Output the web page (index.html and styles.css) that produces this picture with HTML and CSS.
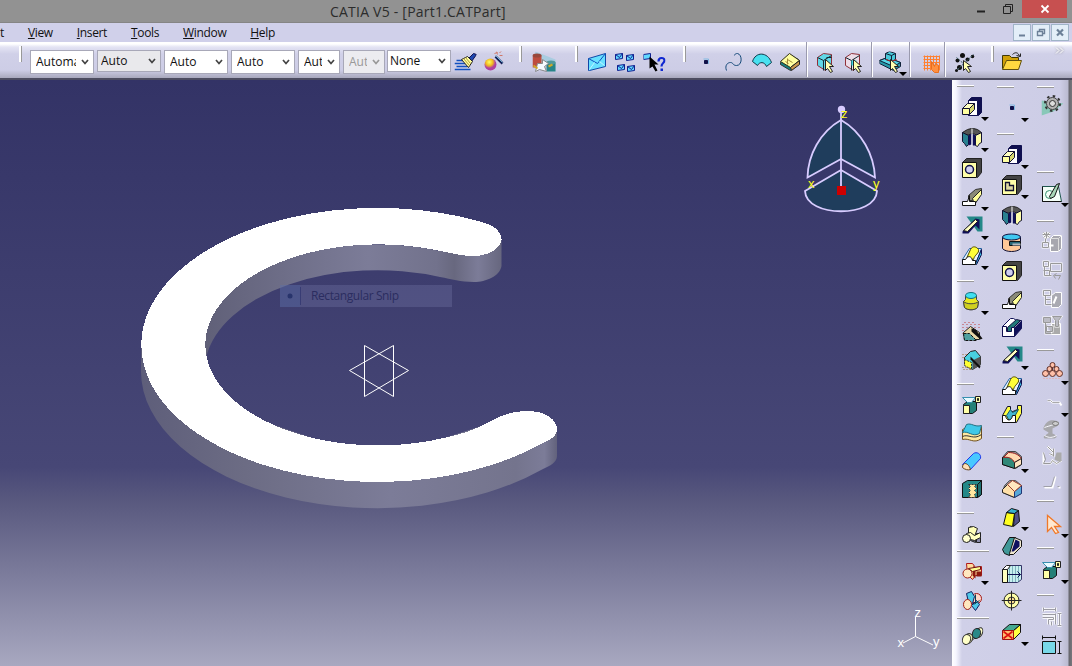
FILE: index.html
```html
<!DOCTYPE html>
<html lang="en">
<head>
<meta charset="utf-8">
<title>CATIA V5 - [Part1.CATPart]</title>
<link rel="stylesheet" href="styles.css">
</head>
<body>
<svg class="sprite" width="0" height="0">
<defs>
<symbol id="pad" viewBox="0 0 22 22"><path d="M7 4l3-3h10v15l-3 3H7z" fill="#101050" stroke="#101050"/><path d="M7 4h9v15H7z" fill="#fff" stroke="#101050"/><path d="M1 12l5-5h7l-5 5z" fill="#ffffc0" stroke="#101030"/><path d="M1 12h7v6H1z" fill="#ffffa0" stroke="#101030"/><path d="M8 12l5-5v6l-5 5z" fill="#d8d870" stroke="#101030"/></symbol>
<symbol id="groove" viewBox="0 0 22 22"><path d="M1 5l5-3 4-1h2l4 1 4 3-3 3-6-2-6 2z" fill="#555" stroke="#222"/><path d="M1 5l6 3v9l-2 2-2-3-2-2z" fill="#288090" stroke="#101030"/><path d="M20 5l-6 3v10l2 1 2-3 2-1z" fill="#ffffa8" stroke="#101030"/><path d="M7 8l3-2v11l-3 1zM11 6l3 2v10h-3z" fill="#101058"/><path d="M10.500 1v18" stroke="#fff"/></symbol>
<symbol id="hole" viewBox="0 0 22 22"><path d="M1 5l4-4h15v14l-4 5z" fill="#444" stroke="#222"/><path d="M1 5h14v15H1z" fill="#ffffa8" stroke="#101010"/><circle cx="8" cy="12" r="4" fill="#d0d0f0" stroke="#101048" stroke-width="1.500"/></symbol>
<symbol id="pocket" viewBox="0 0 22 22"><path d="M1 5l4-4h15v14l-4 5z" fill="#444" stroke="#222"/><path d="M1 5h14v15H1z" fill="#ffffa8" stroke="#101010"/><path d="M4 8h4v3h4v5H4z" fill="#ddd8a0" stroke="#101030" stroke-width="1.300"/></symbol>
<symbol id="rib" viewBox="0 0 22 22"><path d="M7 9l7-6 6-1v3L11 14H7z" fill="#8a8a78" stroke="#333"/><path d="M11 12l9-9v5l-7 10z" fill="#ffff98" stroke="#222"/><path d="M1 15h5l2-6v6h6v4H1z" fill="#fff" stroke="#111"/></symbol>
<symbol id="slot" viewBox="0 0 22 22"><path d="M1 9L9 1h3l3 2h5v8l-7 8H1z" fill="#fff" stroke="#101058"/><path d="M6 10l9-8 4 1-8 8v5H6z" fill="#207878" stroke="#101040"/><path d="M12 11l8-8v8l-7 8z" fill="#101058"/><path d="M1 9h4v5h5v-4h3v9H1z" fill="#fff" stroke="#101050"/></symbol>
<symbol id="stiff" viewBox="0 0 22 22"><path d="M5 1h16v15h-5z" fill="#248888"/><path d="M1 16L14 3l4 1v10l-4-4-7 8H1z" fill="#101058"/><path d="M2 15L14 4l2 2L6 16z" fill="#ffffc0" stroke="#222"/></symbol>
<symbol id="loft" viewBox="0 0 22 22"><path d="M1 14L8 3h12l-6 16H1z" fill="#e8f4ff" stroke="#2060a0"/><path d="M14 18l6-14v5l-5 10z" fill="#38c0e0" stroke="#101050"/><path d="M5 13l4-9c2-4 6-3 8 0 1 4-4 5-5 10z" fill="#ffff38" stroke="#504800"/><path d="M1 14h3c2-4 6-4 7 1h3v4H1z" fill="#fff" stroke="#111"/></symbol>
<symbol id="loftcut" viewBox="0 0 22 22"><path d="M1 12l5-9h3v6l7-3V2h4v8l-5 9H1z" fill="#ffff40" stroke="#101030"/><path d="M5 12l4-6 2 3 6-3-5 9-4 3z" fill="#44b8d0" stroke="#175868"/><path d="M1 12h3c1 6 6 6 7 0h3v7H1z" fill="#fff" stroke="#111"/></symbol>
<symbol id="barrel" viewBox="0 0 22 22"><path d="M4 5v4l-2 2 1 6c3 3 10 3 13 0l1-6-2-2V5z" fill="#e8e820" stroke="#444"/><path d="M2 11c3 3 12 3 15 0l-1 6c-3 3-10 3-13 0z" fill="#d0d020" stroke="#444"/><ellipse cx="9.500" cy="5" rx="5.500" ry="3" fill="#40e0f0" stroke="#147080"/></symbol>
<symbol id="shaft" viewBox="0 0 22 22"><path d="M1 5v11c3 4 15 4 18 0v-3h-7V9h7V5z" fill="#ffc898" stroke="#101030"/><ellipse cx="10" cy="4.500" rx="9" ry="3" fill="#40c8f0" stroke="#101040"/><path d="M8 9h11v4H8z" fill="#286878" stroke="#111"/><path d="M11 11h8v2h-8z" fill="#b0b8c0"/></symbol>
<symbol id="split" viewBox="0 0 22 22"><path d="M1 3h18M3 1h12M1 6h18M1 9h4M1 12h3" stroke="#c04040" stroke-dasharray="1 3"/><path d="M2 11l7-6 9 6v7H3z" fill="#e8d8a8" stroke="#222"/><path d="M2 12h6l7 7H3z" fill="#50a0a0" stroke="#111" stroke-dasharray="3 1"/><path d="M10 7l4 1 7 9-2 1-9-8z" fill="#111"/></symbol>
<symbol id="proc" viewBox="0 0 22 22"><path d="M3 8l6-6 5-1 5 6v8l-8 5-8-5z" fill="#48d0e0" stroke="#222"/><path d="M3 10l7 3v7l-7-4z" fill="#ffff30" stroke="#333" stroke-dasharray="2 1"/><path d="M11 11l8-4v9l-8 4z" fill="#555"/><path d="M9 7l10 10-1 2-9-9z" fill="#111"/><path d="M1 5h5M1 8h2M1 18h8M2 20h8" stroke="#a07030" stroke-dasharray="1 2"/></symbol>
<symbol id="sheet" viewBox="0 0 22 22"><path d="M2 10l4-3h9v9l-4 3H2z" fill="#248078" stroke="#111"/><path d="M2 11h6v8H2z" fill="#ffffa8" stroke="#222"/><path d="M1 3h13l-4 5H6z" fill="#e8faff" stroke="#3890b0"/><path d="M14 2h5v6h-5z" fill="#ffffb0" stroke="#222"/><path d="M16 4h1v2h-1z" stroke="#222"/></symbol>
<symbol id="layers" viewBox="0 0 22 22"><path d="M1 7c6-4 8 4 19-3v12c-8 6-12-1-19 1z" fill="#ffe8a0" stroke="#705020"/><path d="M1 10L5 2c5-2 8 3 15 1l-2 8c-7 4-11-3-17-1z" fill="#40c8e8" stroke="#257080"/><path d="M1 14c6-3 11 4 19-2" fill="none" stroke="#333"/></symbol>
<symbol id="roll" viewBox="0 0 22 22"><path d="M1 14L12 3c3-2 8 0 7 5L9 19z" fill="#48c8ff" stroke="#2038e8"/><path d="M1 17c0-6 6-5 8 2-2 1-6 0-8-2z" fill="#ffe0b8" stroke="#604020"/></symbol>
<symbol id="sew" viewBox="0 0 22 22"><path d="M1 5l5-3h14v14l-4 3H1z" fill="#248888" stroke="#111"/><path d="M7 6l2 2-2 2 2 2-2 2 2 2-2 3h7l-1-3 2-2-2-2 2-2-2-2 2-2z" fill="#ffe8a0" stroke="#333" stroke-dasharray="2 1"/><path d="M16 6l4-4v14l-4 3z" fill="#207070" stroke="#111"/></symbol>
<symbol id="parts" viewBox="0 0 22 22"><path d="M9 2l4 2 1 14-5-2zM15 9h4v9h-4z" fill="#8888a8" stroke="#222"/><path d="M7 3l5-1 4 2-3 8-6-3z" fill="#ffffb8" stroke="#222"/><path d="M5 9l4-1 4 3 6-3v5l-6 3-4-1-3 3z" fill="#ffffc0" stroke="#222"/><circle cx="5" cy="14" r="4" fill="#ffffd0" stroke="#222"/></symbol>
<symbol id="partsred" viewBox="0 0 22 22"><path d="M5 3h6l3 4 6-1v9h-6l-3 4-5-5z" fill="#ffdc9c" stroke="#b01818"/><path d="M12 5l2 3v10l-3-3zM15 11h5v5h-5z" fill="#8b1810"/><circle cx="6" cy="13" r="4.500" fill="#ffe8c0" stroke="#a02018"/><path d="M7 8l12-2v3l-8 2z" fill="#ffff90" stroke="#701010"/></symbol>
<symbol id="partsblue" viewBox="0 0 22 22"><circle cx="15" cy="8" r="5" fill="#ffd8c8" stroke="#a01818"/><path d="M5 3l5-2 3 5-2 7-4-1zM10 15l5-5 3 4-4 6z" fill="#50c8e8" stroke="#102060"/><ellipse cx="6" cy="14" rx="4" ry="5" fill="#ffe8c0" stroke="#a02018"/><path d="M14 4v9M12 14l6-4" stroke="#104050"/></symbol>
<symbol id="bean" viewBox="0 0 22 22"><path d="M9 11l5-4v5l-5 4z" fill="#b8d8e0" stroke="#444"/><ellipse cx="7" cy="13" rx="4" ry="5" transform="rotate(20 7 13)" fill="#e8e8b0" stroke="#333"/><ellipse cx="5" cy="14" rx="4" ry="5" transform="rotate(20 5 14)" fill="#ffffc8" stroke="#333"/><ellipse cx="18" cy="7" rx="3" ry="5" transform="rotate(20 18 7)" fill="#ffffc8" stroke="#333"/><ellipse cx="15" cy="8" rx="4" ry="5" transform="rotate(20 15 8)" fill="#288888" stroke="#222"/></symbol>
<symbol id="fillet" viewBox="0 0 22 22"><path d="M1 9l5-6h8l6 5v8l-6 4-13-4z" fill="#8c8c94" stroke="#444"/><path d="M1 9c5-2 11 0 12 5v6L1 16z" fill="#308878" stroke="#111"/><path d="M7 4c6 0 10 2 13 6l-7 4C11 10 7 8 2 9z" fill="#ffd8b0" stroke="#a02020"/><path d="M13 14l7-4v6l-7 4z" fill="#ffe4c0" stroke="#222"/></symbol>
<symbol id="chamfer" viewBox="0 0 22 22"><path d="M3 8l5-5h6l6 5v8l-7 4-12-5z" fill="#909098" stroke="#555"/><path d="M1 12l5-5 7 7v6L1 15z" fill="#ffe0a8" stroke="#222"/><path d="M13 14l7-6v8l-7 4z" fill="#58a8d8" stroke="#203878"/><path d="M6 7l5-4 9 5-7 6z" fill="#ffe8c0" stroke="#a04030"/></symbol>
<symbol id="draft" viewBox="0 0 22 22"><path d="M13 7l4-3 1 11-6 5z" fill="#505088" stroke="#111"/><path d="M5 6l8 1-2 13-9-2z" fill="#ffff20" stroke="#111"/><path d="M5 6l5-4 7 2-4 3z" fill="#38b0d0" stroke="#111"/></symbol>
<symbol id="shell" viewBox="0 0 22 22"><path d="M1 14L8 2h6L8 20l-5-2z" fill="#409898" stroke="#111"/><path d="M8 18L13 2l7 3v6l-8 8H8z" fill="#f0e8d0" stroke="#111"/><path d="M10 16l4-12 4 2v5l-6 5z" fill="#101060"/></symbol>
<symbol id="thick" viewBox="0 0 22 22"><path d="M5 4l3-2h12v14l-4 3H5z" fill="#c8f0f0" stroke="#336"/><path d="M8 3v15M11 3v15M14 3v15M17 3v15" stroke="#34788c" stroke-dasharray="1 1"/><path d="M1 6h5v13H1z" fill="#ffffc0" stroke="#111"/><path d="M1 6l4-4h4L6 6z" fill="#fff" stroke="#222"/><path d="M6 11h13M16 8l3 3-3 3" fill="none" stroke="#101050"/></symbol>
<symbol id="target" viewBox="0 0 22 22"><circle cx="10" cy="10" r="7.500" fill="#ffffa8" stroke="#222"/><circle cx="10" cy="10" r="3.500" fill="#ffe090" stroke="#333"/><path d="M0 10h20M10 0v20" stroke="#222"/></symbol>
<symbol id="crossbox" viewBox="0 0 22 22"><path d="M12 9l7-6v8l-7 7z" fill="#ffff40" stroke="#111"/><path d="M1 9l7-6h11l-7 6z" fill="#44a890" stroke="#111"/><path d="M1 9h11v9H1z" fill="#ffc070" stroke="#a01010"/><path d="M2 10l9 7M11 10l-9 7" stroke="#e01010" stroke-width="1.600"/></symbol>
<symbol id="point" viewBox="0 0 22 22"><path d="M9 9h3v3H9z" fill="#101048" stroke="#101048"/><path d="M8 7.500h5v5" fill="none" stroke="#60b0e0" stroke-width=".7"/></symbol>
<symbol id="gear" viewBox="0 0 22 22"><path d="M0 6l22 3-10 8-12 4z" fill="#88c8b8"/><circle cx="11" cy="9" r="6" fill="#b4b4b4" stroke="#444"/><circle cx="11" cy="9" r="7.500" fill="none" stroke="#333" stroke-width="2" stroke-dasharray="2.500 3.390"/><circle cx="11" cy="9" r="3" fill="#ddd" stroke="#333"/></symbol>
<symbol id="sketch" viewBox="0 0 22 22"><path d="M1 4h16l3 15H1z" fill="#f4fff8" stroke="#205850"/><path d="M1 4v15h19" fill="none" stroke="#111"/><circle cx="8" cy="12" r="4" fill="none" stroke="#379070"/><path d="M8 14L15 2l3-1-5 13-4 2z" fill="#a8d8b8" stroke="#111"/></symbol>
<symbol id="ghost1" viewBox="0 0 22 22"><path d="M9 7l3-3h8v13l-3 3H9z" fill="#a7a7af" stroke="#fff"/><path d="M9 7h8v13M17 7l3-3" fill="none" stroke="#ddd"/><path d="M1 3h8M5 0v7M2 1l6 5M8 1L2 6M1 11h6v5H1zM7 14h5M4 7v4" fill="none" stroke="#fff" stroke-width="2"/><path d="M1 3h8M5 0v7M2 1l6 5M8 1L2 6M1 11h6v5H1zM4 7v4" fill="none" stroke="#999"/></symbol>
<symbol id="ghost2" viewBox="0 0 22 22"><path d="M2 2h5v5H2zM9 4h11v8H9zM3 7v9h7M2 11h6v5" fill="none" stroke="#fff" stroke-width="2"/><path d="M2 2h5v5H2zM9 4h11v8H9zM3 7v9h7M2 11h6v5M13 16h6l-2 4M15 14l-3 2 2 3" fill="none" stroke="#999"/></symbol>
<symbol id="ghost3" viewBox="0 0 22 22"><path d="M10 7l4-3h6v12l-3 3h-7z" fill="#aaaab2" stroke="#fff"/><path d="M2 2h7v5H2zM4 7v9h6M4 11h5M15 8l-3 7" fill="none" stroke="#fff" stroke-width="2"/><path d="M2 2h7v5H2zM4 7v9h6M4 11h5" fill="none" stroke="#999"/></symbol>
<symbol id="ghost4" viewBox="0 0 22 22"><path d="M10 8h9v11h-9z" fill="#aaa" stroke="#fff"/><path d="M2 2h7v5H2zM4 7v11h6M5 11h6v5H5zM11 1h9l-3 4v6h-3V5z" fill="none" stroke="#fff" stroke-width="2"/><path d="M2 2h7v5H2zM4 7v11h6M5 11h6v5H5zM11 1h9l-3 4v6h-3V5z" fill="#bcbcc4" stroke="#999"/></symbol>
<symbol id="balls" viewBox="0 0 22 22"><g fill="#ffc0a8" stroke="#603028"><path d="M11 5L5 13M11 5v8M12 5l6 8"/><circle cx="11" cy="4.500" r="2.500"/><circle cx="8" cy="8.500" r="2.500"/><circle cx="15" cy="8.500" r="2.500"/><circle cx="4" cy="13" r="3"/><circle cx="11" cy="13" r="3"/><circle cx="18" cy="13" r="3"/></g><path d="M2 18h18" stroke="#f0a090" stroke-dasharray="1 2"/></symbol>
<symbol id="ghost5" viewBox="0 0 22 22"><path d="M6 8h3l2 2h7l2 3" fill="none" stroke="#fff" stroke-width="2"/><path d="M6 8h3l2 2h7" fill="none" stroke="#aaa"/></symbol>
<symbol id="ghost6" viewBox="0 0 22 22"><path d="M2 9c3-7 8-8 11-7 5 0 6 4 2 6l-4 2v5c5 2 5 4 2 5H3c-3-3 4-4 4-6L2 11z" fill="#a8a8ac"/><path d="M3 9c5-2 10-2 13-6M3 17c5 3 8 2 12 0" fill="none" stroke="#f8f8ff"/><ellipse cx="14" cy="5" rx="3" ry="2" fill="#ccc" stroke="#777"/></symbol>
<symbol id="ghost7" viewBox="0 0 22 22"><path d="M6 1l6 6v4M12 3v7L8 8M2 7v11h7l2-3 4 3 5-3" fill="none" stroke="#fff" stroke-width="2"/><path d="M15 7h5v8l-3 1-4-2z" fill="#aaa"/><path d="M6 1l6 6v4M12 3v7L8 8M2 7l2 7-2 4h7l2-3 4 3 5-3" fill="none" stroke="#999"/></symbol>
<symbol id="ghost8" viewBox="0 0 22 22"><path d="M3 16h8L14 5M17 16h2" fill="none" stroke="#fff" stroke-width="2"/><path d="M2 15h8L13 5M16 15h2" fill="none" stroke="#a0a0a8"/></symbol>
<symbol id="select" viewBox="0 0 22 22"><path d="M6 2v16l4-4 4 6 3-1-4-6h6z" fill="#ffe8d0" stroke="#f07828" stroke-width="1.300"/></symbol>
<symbol id="ghost9" viewBox="0 0 22 22"><path d="M2 4h12M2 2v4M14 2v4M1 9h13M1 12h11v2H7v5M14 8v11M18 8v12M16 8h4M16 20h4M10 16v4" fill="none" stroke="#fff" stroke-width="2.500"/><path d="M2 4h12M2 2v4M14 2v4M1 9h13M1 12h11v2H7v5M14 8v11M18 8v12M16 8h4M16 20h4M10 16v4" fill="none" stroke="#9c9ca4"/></symbol>
<symbol id="measure" viewBox="0 0 22 22"><path d="M1 7h13v12H1z" fill="#78d8e8" stroke="#111"/><path d="M1 3h13M1 1v4M14 1v4M18 7v12M16 7h4M16 19h4" fill="none" stroke="#111"/></symbol>
<symbol id="brush" viewBox="0 0 22 22"><path d="M2 9h9M0 12h11M2 15h11M0 18h16" stroke="#1050c0" stroke-width="1.500"/><path d="M14 7l5-5 3 1-5 7z" fill="#2048b0" stroke="#101050"/><path d="M7 8l6-3 5 5-4 6z" fill="#ffffa0" stroke="#222"/><path d="M9 7l6 7M11 6l5 6" stroke="#b09838"/></symbol>
<symbol id="wand" viewBox="0 0 22 22"><circle cx="8" cy="13" r="6" fill="url(#ball)"/><path d="M13 5l7 7" stroke="#142058" stroke-width="2.500"/><path d="M13 4l7 7" stroke="#70b0d0"/><path d="M12 2l3-1M17 1l2-1M17 4h3M14 0l1 3" stroke="#d07868"/></symbol>
<symbol id="books" viewBox="0 0 24 22"><path d="M3 0l20 8v12L1 8z" fill="#a8cce0"/><path d="M0 4h9v12H0z" fill="#bd4c3e"/><ellipse cx="4.500" cy="4" rx="4.500" ry="2" fill="#98483c"/><path d="M14 11h9v9h-9z" fill="#278488"/><ellipse cx="18.500" cy="11" rx="4.500" ry="2" fill="#50989c"/><path d="M5 12h5V8l6 4-4 3 2 5-7-2-4 2z" fill="#f5faff" stroke="#888"/><path d="M1 14l4 3M16 15l4-2" stroke="#d0a828" stroke-width="2"/></symbol>
<symbol id="mail" viewBox="0 0 22 22"><path d="M2 7l17-5v13L3 19H2z" fill="#68e0ff" stroke="#1048a8"/><path d="M2 7l9 5 8-10" fill="none" stroke="#1050c0"/><path d="M3 18l5-7M18 14l-5-4" stroke="#c0f4ff"/></symbol>
<symbol id="mails" viewBox="0 0 22 22"><g fill="#60d8ff" stroke="#102090"><path d="M1 3l7-1v5l-7 1zM12 4l7-1v5l-7 1zM3 14l7-1v5l-7 1zM13 15l7-1v5l-7 1z"/><path d="M1 3l4 3 3-4M12 4l4 3 3-4M3 14l4 3 3-4M13 15l4 3 3-4" fill="none"/></g></symbol>
<symbol id="mailhelp" viewBox="0 0 22 22"><path d="M0 3l7-1v5l-7 1z" fill="#60d8ff" stroke="#102090"/><path d="M6 5v12l3-2 3 5 2-1-3-6h4z" fill="#000"/><path d="M15 10c0-5 6-4 6-1 0 3-3 2-3 6" fill="none" stroke="#1028d0" stroke-width="2.200"/><path d="M17 17h2.500v2.500H17z" fill="#1028d0"/></symbol>
<symbol id="curve" viewBox="0 0 22 22"><path d="M3 19C1 14 4 11 7 11s2 3 6 3c6 0 6-11 1-12-3 0-3 2-3 2" fill="none" stroke="#144878"/></symbol>
<symbol id="surface" viewBox="0 0 22 22"><path d="M1 10C4 0 16 0 20 11l-5 4c-2-5-7-5-9-1z" fill="#48e0f0" stroke="#103848"/></symbol>
<symbol id="solid" viewBox="0 0 22 22"><path d="M1 11l9-8 9 5v4l-8 7-10-6z" fill="#188080" stroke="#333"/><path d="M1 10l9-8 10 7-9 7z" fill="#ffffa0" stroke="#303018"/><path d="M6 10l3 2M8 7v6M8 8l5 3" stroke="#a08838"/><path d="M11 16l9-7v4l-8 6z" fill="#c89850" stroke="#222"/></symbol>
<symbol id="cubesel" viewBox="0 0 22 22"><path d="M3 6l6-4 8 1v10l-6 6-8-5z" fill="#60d8e8" stroke="#903038"/><path d="M3 6l6 3 8-5M9 9v10M12 6h5" fill="none" stroke="#112830"/><path d="M11 8v11l2-2 3 4 2-1-3-5h4z" fill="#ffffb0" stroke="#222"/></symbol>
<symbol id="cubesel2" viewBox="0 0 22 22"><path d="M3 6l6-4 8 1v10l-6 6-8-5z" fill="#ecdce8" stroke="#903038"/><path d="M3 6l6 3 8-5M9 9v10" fill="none" stroke="#112830"/><path d="M9 9h5v5H9z" fill="#40d8e8"/><path d="M11 8v11l2-2 3 4 2-1-3-5h4z" fill="#ffffb0" stroke="#222"/></symbol>
<symbol id="treesel" viewBox="0 0 22 22"><path d="M0 9l8-3 13 5v4l-7 4L0 12z" fill="#2898a8" stroke="#102038"/><path d="M0 9l8-3 13 5-7 4z" fill="#58d8e8" stroke="#102038"/><path d="M6 2l4-2 6 2v6l-4 2-6-2z" fill="#48c8d8" stroke="#102038"/><path d="M6 2l6 2 4-2M12 4v5" fill="none" stroke="#102038"/><path d="M7 8l5 2 5-2" fill="none" stroke="#c02020"/><path d="M11 8v11l2-2 3 4 2-1-3-5h4z" fill="#ffffb0" stroke="#222"/></symbol>
<symbol id="grid" viewBox="0 0 22 22"><path d="M3 5h16M3 8h16M3 11h16M3 14h15M3 17h15M4 4v15M7 4v15M10 4v15M13 4v15M16 4v15M19 4v15" stroke="#ff8030"/><path d="M11 10v8l3 3h4v-7l-3-2-1 3z" fill="#ff9040" stroke="#e87020"/></symbol>
<symbol id="stars" viewBox="0 0 22 22"><g fill="#111"><circle cx="8" cy="4" r="2.500"/><circle cx="3" cy="9" r="2"/><circle cx="5" cy="16" r="2.500"/><circle cx="13" cy="8" r="2"/><circle cx="18" cy="5" r="1.800"/><circle cx="2" cy="19" r="1.500"/></g><path d="M2 6l8 7M3 18L19 3" stroke="#386068" stroke-dasharray="2 1"/><path d="M9 9v10l2-2 3 4 2-1-3-5h4z" fill="#ffffb0" stroke="#222"/></symbol>
<symbol id="folder" viewBox="0 0 22 22"><path d="M1 4h7l2 2h7v11H1z" fill="#d0a008" stroke="#403808"/><path d="M1 18l4-9h15l-3 9z" fill="#ffd840" stroke="#605010"/><path d="M11 3c3-3 6-2 7 2M15 4l4 1V2" fill="none" stroke="#222"/></symbol>
<radialGradient id="ball" cx=".4" cy=".3"><stop offset="0" stop-color="#ffff60"/><stop offset=".6" stop-color="#f0b820"/><stop offset="1" stop-color="#b040a0"/></radialGradient>
<linearGradient id="outerWall" x1="141" x2="557" gradientUnits="userSpaceOnUse"><stop offset="0" stop-color="#5e5e7a"/><stop offset=".25" stop-color="#6c6c84"/><stop offset=".6" stop-color="#7c7c98"/><stop offset=".9" stop-color="#74748d"/><stop offset=".97" stop-color="#7c7c98"/><stop offset="1" stop-color="#62627c"/></linearGradient>
<linearGradient id="innerWall" x1="204" x2="502" gradientUnits="userSpaceOnUse"><stop offset="0" stop-color="#606078"/><stop offset=".55" stop-color="#7c7c98"/><stop offset=".78" stop-color="#72728c"/><stop offset=".84" stop-color="#68687f"/><stop offset=".92" stop-color="#7c7c98"/><stop offset="1" stop-color="#66667e"/></linearGradient>
</defs>
</svg>

<div class="window">
<header class="titlebar">
  <h1 class="title">CATIA V5 - [Part1.CATPart]</h1>
  <div class="controls">
    <svg class="ctl" viewBox="0 0 28 18"><path d="M10 11.500h8" stroke="#222" stroke-width="2"/></svg>
    <svg class="ctl" viewBox="0 0 28 18"><path d="M8.500 6.500h7v7h-7zM10.500 6V4.500h7v7H16" fill="none" stroke="#222"/></svg>
    <span class="close"><svg viewBox="0 0 10 10"><path d="M1.500 1.500l7 7M8.500 1.500l-7 7" stroke="#fff" stroke-width="1.800"/></svg></span>
  </div>
</header>

<nav class="menubar">
  <span class="menu">t</span>
  <span class="menu"><u>V</u>iew</span>
  <span class="menu"><u>I</u>nsert</span>
  <span class="menu"><u>T</u>ools</span>
  <span class="menu"><u>W</u>indow</span>
  <span class="menu"><u>H</u>elp</span>
  <div class="mdi">
    <svg viewBox="0 0 16 15"><path d="M5 10.500h6" stroke="#6c8098" stroke-width="2"/></svg>
    <svg viewBox="0 0 16 15"><path d="M4.500 6.500h5v4h-5zM6.500 6V4.500h5v4H10" fill="none" stroke="#6c8098" stroke-width="1.400"/></svg>
    <svg viewBox="0 0 16 15"><path d="M5 4.500l6 6M11 4.500l-6 6" stroke="#6c8098" stroke-width="2.200"/></svg>
  </div>
</nav>

<div class="toolbar">
  <i class="grip"></i>
  <div class="combo"><span>Automatic</span><svg viewBox="0 0 8 6"><path d="M1 1l3 3.500L7 1"/></svg></div>
  <div class="combo flat"><span>Auto</span><svg viewBox="0 0 8 6"><path d="M1 1l3 3.500L7 1"/></svg></div>
  <div class="combo"><span>Auto</span><svg viewBox="0 0 8 6"><path d="M1 1l3 3.500L7 1"/></svg></div>
  <div class="combo"><span>Auto</span><svg viewBox="0 0 8 6"><path d="M1 1l3 3.500L7 1"/></svg></div>
  <div class="combo small"><span>Auto</span><svg viewBox="0 0 8 6"><path d="M1 1l3 3.500L7 1"/></svg></div>
  <div class="combo small disabled"><span>Auto</span><svg viewBox="0 0 8 6"><path d="M1 1l3 3.500L7 1"/></svg></div>
  <div class="combo short"><span>None</span><svg viewBox="0 0 8 6"><path d="M1 1l3 3.500L7 1"/></svg></div>
  <div class="tool"><svg><use href="#brush"/></svg></div>
  <div class="tool"><svg><use href="#wand"/></svg></div>
  <i class="grip"></i>
  <div class="tool"><svg class="wide"><use href="#books"/></svg></div>
  <i class="grip"></i>
  <div class="tool"><svg><use href="#mail"/></svg></div>
  <div class="tool"><svg><use href="#mails"/></svg></div>
  <div class="tool"><svg><use href="#mailhelp"/></svg></div>
  <i class="grip"></i>
  <div class="tool"><svg><use href="#point"/></svg></div>
  <div class="tool"><svg><use href="#curve"/></svg></div>
  <div class="tool"><svg><use href="#surface"/></svg></div>
  <div class="tool"><svg><use href="#solid"/></svg></div>
  <i class="divider"></i>
  <div class="tool"><svg><use href="#cubesel"/></svg></div>
  <div class="tool"><svg><use href="#cubesel2"/></svg></div>
  <i class="divider"></i>
  <div class="tool more"><svg><use href="#treesel"/></svg></div>
  <i class="divider"></i>
  <div class="tool"><svg><use href="#grid"/></svg></div>
  <i class="divider"></i>
  <div class="tool"><svg><use href="#stars"/></svg></div>
  <i class="grip"></i>
  <div class="tool"><svg><use href="#folder"/></svg></div>
  <svg class="overflow" viewBox="0 0 9 7"><path d="M1 0.500l3 3-3 3M5 0.500l3 3-3 3"/></svg>
</div>

<main class="workspace">
  <svg class="viewport" viewBox="0 80 952 586">
    <path d="M141 345V371A236.500 137 0 0 0 543 469C550 466 557 462 557 456V430L500 420L377 460L200 400Z" fill="url(#outerWall)"/>
    <path d="M501.500 240V266C500 276 486 282 474 282C460 282 452 279 440 277A173 100.500 0 0 0 206 358A173 100.500 0 0 1 440 251L474 250Z" fill="url(#innerWall)"/>
    <path d="M480 221.400C495 225 502 232 501.500 240C500 250 486 256 474 256C460 256 452 253 440 251A173 100.500 0 1 0 440 438.800C462 434 471 431 483 425S507 411 527 411C545 411 557 419 557 430C557 436 550 440 543 443A236.500 137 0 1 1 480 221.400Z" fill="#fff" shape-rendering="crispEdges"/>
    <path d="M349.500 370.500L393.500 345.500V396.500ZM408.500 370.500L364.500 345.500V396.500Z" fill="none" stroke="#fff"/>
    <g class="snip">
      <path d="M280 285h172v22H280z" fill="#8084b4" opacity=".27"/>
      <path d="M280 285h20v22h-20z" fill="#4560a0" opacity=".3"/>
      <path d="M300.500 287v18" stroke="#383c74"/>
      <circle cx="290" cy="296" r="2.500" fill="#28346c"/>
      <text x="311" y="300" textLength="88">Rectangular Snip</text>
    </g>
    <g fill="#1f3d5c" stroke="#d8ccff" stroke-width="1.800">
      <path d="M841 120C820 132 808 155 807.500 177.500L841 159L875 177.500C874 155 862 132 841 120Z"/>
      <path d="M805 191L841 170L877 191C876 218 806 218 805 191Z"/>
      <path d="M841 110V188"/>
      <circle cx="841.500" cy="109.500" r="2.800" fill="#d8ccff"/>
    </g>
    <path d="M837 186h9v9h-9z" fill="#cc0000"/>
    <g class="compass-label"><text x="841" y="118">z</text><text x="808" y="188">x</text><text x="873" y="188">y</text></g>
    <path d="M915.500 617V636.500L903 643M915.500 636.500L933 645" fill="none" stroke="#fff"/>
    <g class="axis-label"><text x="914.500" y="617">z</text><text x="897.500" y="647">x</text><text x="933" y="646">y</text></g>
  </svg>

  <aside class="palette">
    <div class="column first">
      <i class="bar"></i>
      <div class="tool more"><svg><use href="#pad"/></svg></div>
      <div class="tool more"><svg><use href="#groove"/></svg></div>
      <div class="tool"><svg><use href="#hole"/></svg></div>
      <div class="tool more"><svg><use href="#rib"/></svg></div>
      <div class="tool more"><svg><use href="#stiff"/></svg></div>
      <div class="tool more"><svg><use href="#loft"/></svg></div>
      <i class="bar"></i>
      <div class="tool more"><svg><use href="#barrel"/></svg></div>
      <div class="tool"><svg><use href="#split"/></svg></div>
      <div class="tool"><svg><use href="#proc"/></svg></div>
      <i class="bar"></i>
      <div class="tool"><svg><use href="#sheet"/></svg></div>
      <div class="tool"><svg><use href="#layers"/></svg></div>
      <div class="tool"><svg><use href="#roll"/></svg></div>
      <div class="tool"><svg><use href="#sew"/></svg></div>
      <i class="bar"></i>
      <div class="tool"><svg><use href="#parts"/></svg></div>
      <i class="bar long"></i>
      <div class="tool more"><svg><use href="#partsred"/></svg></div>
      <div class="tool"><svg><use href="#partsblue"/></svg></div>
      <i class="bar long"></i>
      <div class="tool"><svg><use href="#bean"/></svg></div>
    </div>
    <div class="column second">
      <i class="bar"></i>
      <div class="tool more"><svg><use href="#point"/></svg></div>
      <i class="bar"></i>
      <div class="tool more"><svg><use href="#pad"/></svg></div>
      <div class="tool more"><svg><use href="#pocket"/></svg></div>
      <div class="tool"><svg><use href="#groove"/></svg></div>
      <div class="tool"><svg><use href="#shaft"/></svg></div>
      <div class="tool"><svg><use href="#hole"/></svg></div>
      <div class="tool"><svg><use href="#rib"/></svg></div>
      <div class="tool"><svg><use href="#slot"/></svg></div>
      <div class="tool more"><svg><use href="#stiff"/></svg></div>
      <div class="tool"><svg><use href="#loft"/></svg></div>
      <div class="tool"><svg><use href="#loftcut"/></svg></div>
      <i class="bar"></i>
      <div class="tool more"><svg><use href="#fillet"/></svg></div>
      <div class="tool"><svg><use href="#chamfer"/></svg></div>
      <div class="tool more"><svg><use href="#draft"/></svg></div>
      <div class="tool"><svg><use href="#shell"/></svg></div>
      <div class="tool"><svg><use href="#thick"/></svg></div>
      <div class="tool"><svg><use href="#target"/></svg></div>
      <div class="tool more"><svg><use href="#crossbox"/></svg></div>
    </div>
    <div class="column third">
      <i class="bar"></i>
      <div class="tool"><svg><use href="#gear"/></svg></div>
      <i class="bar"></i>
      <div class="tool more"><svg><use href="#sketch"/></svg></div>
      <i class="bar"></i>
      <div class="tool"><svg><use href="#ghost1"/></svg></div>
      <div class="tool"><svg><use href="#ghost2"/></svg></div>
      <div class="tool"><svg><use href="#ghost3"/></svg></div>
      <div class="tool"><svg><use href="#ghost4"/></svg></div>
      <i class="bar"></i>
      <div class="tool more"><svg><use href="#balls"/></svg></div>
      <div class="tool more"><svg><use href="#ghost5"/></svg></div>
      <div class="tool"><svg><use href="#ghost6"/></svg></div>
      <div class="tool"><svg><use href="#ghost7"/></svg></div>
      <div class="tool"><svg><use href="#ghost8"/></svg></div>
      <i class="bar"></i>
      <div class="tool more"><svg><use href="#select"/></svg></div>
      <i class="bar"></i>
      <div class="tool more"><svg><use href="#sheet"/></svg></div>
      <i class="bar"></i>
      <div class="tool"><svg><use href="#ghost9"/></svg></div>
      <div class="tool"><svg><use href="#measure"/></svg></div>
    </div>
  </aside>
</main>
</div>
</body>
</html>
```
FILE: styles.css
```css
* { box-sizing: border-box; }
body { margin: 0; overflow: hidden; font-family: "Open Sans", "Noto Sans", sans-serif; }
.sprite { position: absolute; }
.window { width: 1072px; height: 666px; display: flex; flex-direction: column; background: #cfcfe8; }

.titlebar { height: 23px; display: flex; justify-content: space-between; background: #929292; border-bottom: 1px solid #858585; padding: 0 5px 0 330px; }
.title { margin: 0; font-size: 14px; line-height: 23px; font-weight: 400; color: #2c2c2c; letter-spacing: 0.22px; white-space: nowrap; }
.controls { display: flex; }
.ctl { width: 28px; height: 18px; }
.close { width: 45px; height: 18px; background: #c75050; display: flex; align-items: center; justify-content: center; margin-left: -1px; }
.close svg { width: 10px; height: 10px; }

.menubar { height: 19px; display: flex; align-items: center; gap: 24px; background: #d0d0ea; font-size: 12px; line-height: 18px; letter-spacing: -0.35px; color: #111; padding-right: 3px; }
.mdi { margin-left: auto; display: flex; gap: 1px; }
.mdi svg { width: 18px; height: 17px; background: #e3eef8; border: 1px solid #a0b4c8; }

.toolbar { height: 38px; flex: none; display: grid; align-items: start; padding: 0 0 0 19px; border-bottom: 2px solid #4c4c60; background: linear-gradient(#fff 0, #fff 2px, #e4e4f4 5px, #d0d0e8 12px, #cdcde6 28px, #a8a8bc 36px);
  grid-template-columns: 11px 67px 67px 67px 67px 45px 44px 67px 28px 37px 13px 43px 11px 28px 29px 40px 12px 28px 28px 28px 27px 8px 28px 29px 8px 30px 11px 24px 10px 37px 10px 54px 17px; }
.toolbar .tool { margin-top: 9px; }
.grip { width: 3px; height: 16px; margin-top: 4px; border-right: 1px solid #999; background: #fff; }
.divider { width: 2px; height: 35px; background: #fff; border-left: 1px solid #9a9aae; }
.combo { width: 64px; height: 24px; margin-top: 8px; padding: 0 4px 0 5px; display: flex; align-items: center; justify-content: space-between; background: #fff; border: 1px solid #a8a8b8; color: #111; font-size: 12px; }
.combo span { overflow: hidden; white-space: nowrap; width: 40px; line-height: 20px; }
.combo svg { width: 8px; height: 6px; flex: none; fill: none; stroke: #444; stroke-width: 1.7; }
.combo.flat { height: 22px; background: #e9e9ec; padding-left: 3px; }
.combo.short { height: 22px; padding-left: 2px; }
.combo.small { width: 42px; }
.combo.small span { width: 18px; }
.combo.disabled { background: #ececf0; color: #999; }
.combo.disabled svg { stroke: #999; }
.overflow { width: 9px; height: 7px; margin-top: 5px; fill: none; stroke: #fff; filter: drop-shadow(0 0 1px #888); }

.tool { position: relative; width: 22px; height: 22px; }
.tool svg { display: block; width: 22px; height: 22px; overflow: visible; }
.tool use { transform: translate(0.5px, 0.5px); }
.tool svg.wide { width: 24px; }
.more::after { content: ""; position: absolute; left: 20px; top: 21px; border: 4px solid transparent; border-top-color: #000; border-bottom: 0; }

.workspace { flex: 1; min-height: 0; display: flex; }
.viewport { width: 952px; height: 586px; background: linear-gradient(#333366 0%, #474776 66%, #59597f 72%, #a8a8c0 100%); }
.snip text { font-size: 12px; fill: #2b2d60; }
.compass-label text { font: 13px "Liberation Sans", sans-serif; fill: #ffff20; }
.axis-label text { font: 13px "Liberation Sans", sans-serif; fill: #fff; }

.palette { width: 120px; display: flex; background: linear-gradient(90deg, #fff 0, #f5f5ff 4px, #d0d0e8 10px, #cdcde6 108px, #babad0 116px, #66666e 117px, #77777c 120px); }
.column { width: 40px; display: grid; align-items: start; align-content: start; }
.column .tool { margin-left: 9px; }
.first { padding-top: 5px; grid-template-rows: 11px 31px 30px 29px 29px 30px 35px 10px 31px 28px 34px 11px 28px 28px 28px 34px 12px 26px 10px 30px 27px 8px 22px; }
.second { padding-top: 6px; grid-template-rows: 11px 36px 11px 30px 31px 27px 28px 29px 28px 28px 30px 28px 33px 12px 29px 29px 29px 28px 27px 31px 22px; }
.third { padding-top: 6px; grid-template-rows: 8px 77px 11px 38px 11px 28px 29px 27px 34px 11px 32px 26px 27px 26px 29px 13px 34px 12px 35px 11px 29px 22px; }
.bar { width: 17px; height: 2px; margin-left: 5px; background: #fff; border-bottom: 1px solid #999; }
.bar.long { width: 32px; }
```
